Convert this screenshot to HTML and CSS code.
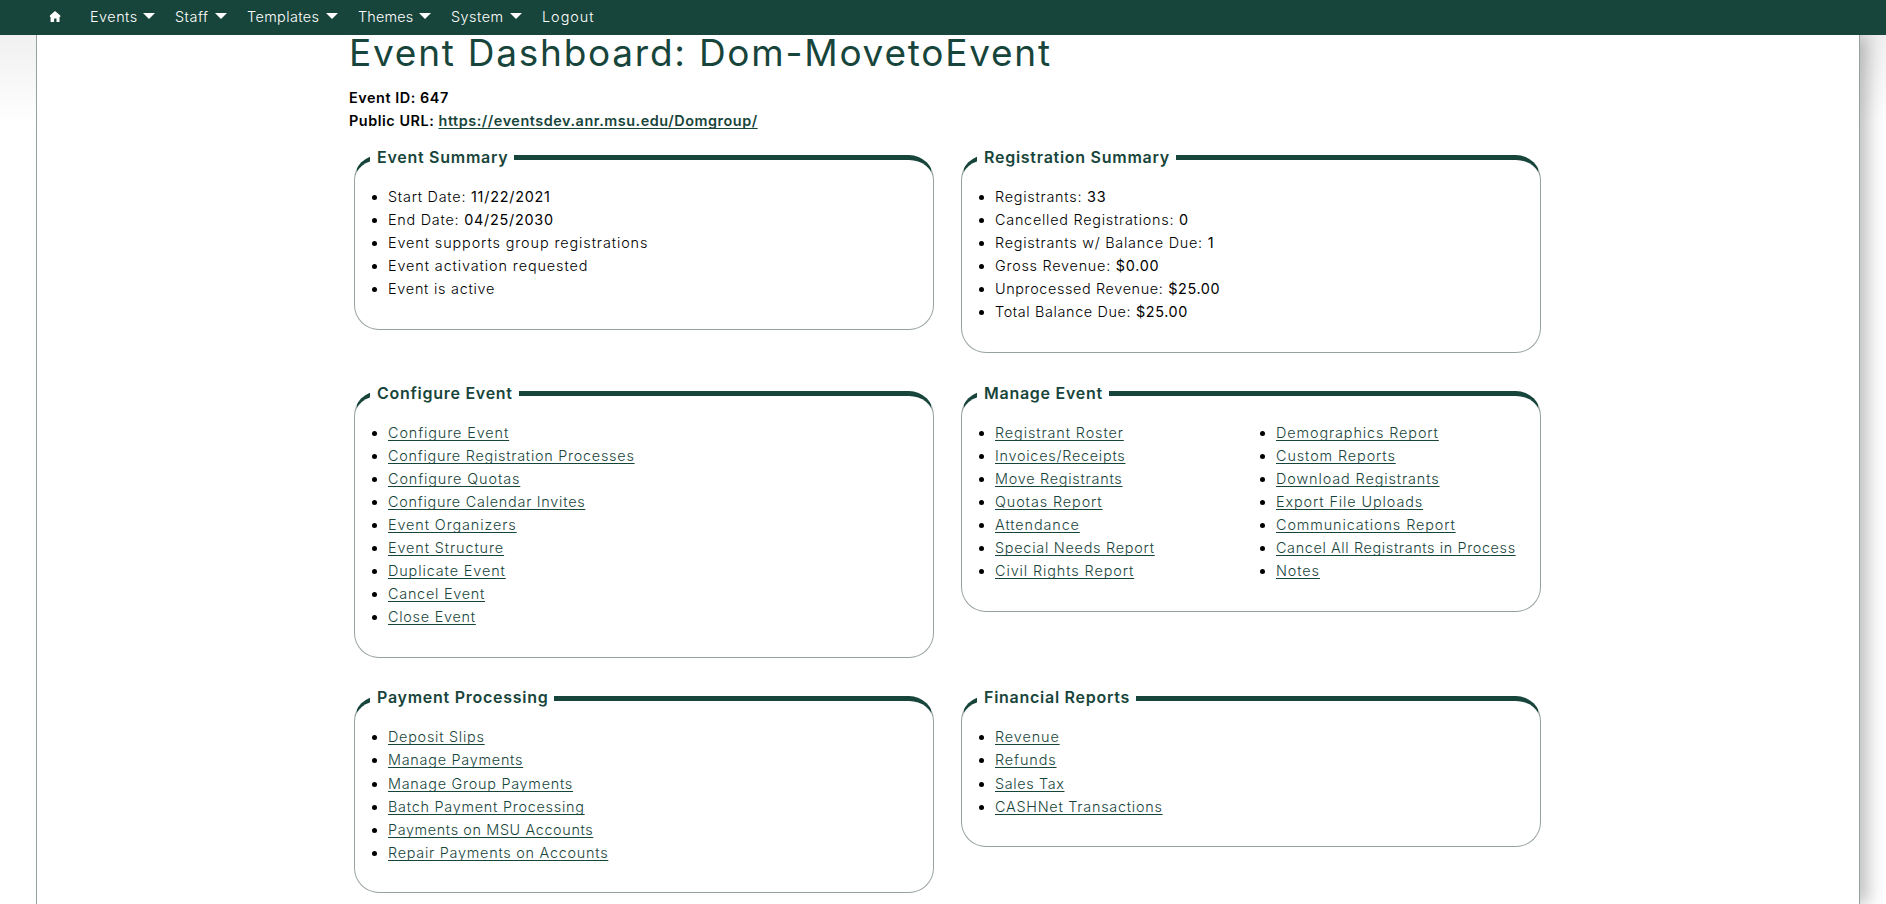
FILE: index.html
```html
<!DOCTYPE html>
<html lang="en">
<head>
<meta charset="utf-8">
<title>Event Dashboard</title>
<link rel="stylesheet" href="styles.css">
</head>
<body>
<nav class="nav">
  <a class="home" href="#" aria-label="Home"><svg width="12" height="11" viewBox="0 0 12 11"><path d="M6 0 11.3 4.6V6h-.8v5H7.5V7.4h-2.4V11H1.6V6H.9V4.6z" fill="#fff"/></svg></a>
  <a class="item n1" href="#">Events<i class="caret"></i></a>
  <a class="item n2" href="#">Staff<i class="caret"></i></a>
  <a class="item n3" href="#">Templates<i class="caret"></i></a>
  <a class="item n4" href="#">Themes<i class="caret"></i></a>
  <a class="item n5" href="#">System<i class="caret"></i></a>
  <a class="item n6" href="#">Logout</a>
</nav>
<div class="page">
  <main class="content">
    <h1>Event Dashboard: Dom-MovetoEvent</h1>
    <p class="meta">Event ID: 647<br>Public URL: <a href="#">https://eventsdev.anr.msu.edu/Domgroup/</a></p>
    <div class="grid">
      <fieldset><legend>Event Summary</legend>
        <ul><li>Start Date: <b>11/22/2021</b></li><li>End Date: <b>04/25/2030</b></li><li class="wide">Event supports group registrations</li><li class="wide">Event activation requested</li><li>Event is active</li></ul>
      </fieldset>
      <fieldset><legend>Registration Summary</legend>
        <ul><li>Registrants: <b>33</b></li><li>Cancelled Registrations: <b>0</b></li><li>Registrants w/ Balance Due: <b>1</b></li><li>Gross Revenue: <b>$0.00</b></li><li class="tight">Unprocessed Revenue: <b>$25.00</b></li><li class="tight">Total Balance Due: <b>$25.00</b></li></ul>
      </fieldset>
      <fieldset><legend>Configure Event</legend>
        <ul><li class="wide"><a href="#">Configure Event</a></li><li><a href="#">Configure Registration Processes</a></li><li class="wide"><a href="#">Configure Quotas</a></li><li><a href="#">Configure Calendar Invites</a></li><li class="wide"><a href="#">Event Organizers</a></li><li class="wide"><a href="#">Event Structure</a></li><li class="wide"><a href="#">Duplicate Event</a></li><li><a href="#">Cancel Event</a></li><li><a href="#">Close Event</a></li></ul>
      </fieldset>
      <fieldset><legend>Manage Event</legend>
        <div class="two">
        <ul><li class="wide"><a href="#">Registrant Roster</a></li><li><a href="#">Invoices/Receipts</a></li><li><a href="#">Move Registrants</a></li><li class="wide"><a href="#">Quotas Report</a></li><li class="wide"><a href="#">Attendance</a></li><li><a href="#">Special Needs Report</a></li><li class="wide"><a href="#">Civil Rights Report</a></li></ul>
        <ul><li class="wide"><a href="#">Demographics Report</a></li><li class="wide"><a href="#">Custom Reports</a></li><li class="wide"><a href="#">Download Registrants</a></li><li class="wide"><a href="#">Export File Uploads</a></li><li class="wide"><a href="#">Communications Report</a></li><li class="tight"><a href="#">Cancel All Registrants in Process</a></li><li class="wide"><a href="#">Notes</a></li></ul>
        </div>
      </fieldset>
      <fieldset><legend>Payment Processing</legend>
        <ul><li><a href="#">Deposit Slips</a></li><li><a href="#">Manage Payments</a></li><li><a href="#">Manage Group Payments</a></li><li><a href="#">Batch Payment Processing</a></li><li class="tight"><a href="#">Payments on MSU Accounts</a></li><li><a href="#">Repair Payments on Accounts</a></li></ul>
      </fieldset>
      <fieldset><legend>Financial Reports</legend>
        <ul><li class="wide"><a href="#">Revenue</a></li><li class="wide"><a href="#">Refunds</a></li><li class="tight"><a href="#">Sales Tax</a></li><li><a href="#">CASHNet Transactions</a></li></ul>
      </fieldset>
    </div>
  </main>
</div>
</body>
</html>
```
FILE: styles.css
```css
* { box-sizing: border-box; }
html, body { height: 100%; }
body {
  margin: 0;
  display: flex;
  flex-direction: column;
  overflow: hidden;
  background: linear-gradient(#eff0ef 35px, #fff 125px);
  color: #000;
  font: 300 14.4px/23.04px Inter, "Open Sans", sans-serif;
  letter-spacing: 0.5px;
}
a { color: #18453b; text-underline-offset: 2px; text-decoration-thickness: 1px; text-decoration-skip-ink: none; }
.nav {
  flex: none;
  height: 35px;
  padding: 0 0 2px 49px;
  display: flex;
  align-items: center;
  background: #18453b;
}
.nav a { color: #fff; text-decoration: none; display: flex; align-items: center; }
.home { width: 41px; }
.item { justify-content: space-between; margin-right: 20px; white-space: nowrap; }
.n1 { width: 65px; }
.n2 { width: 52px; }
.n3 { width: 91px; letter-spacing: 0.4px; }
.n4 { width: 73px; letter-spacing: 0.2px; }
.n5 { width: 71px; }
.n6 { letter-spacing: 1px; }
.caret { border: 6px solid transparent; border-top-color: #fff; border-bottom: 0; }
.page {
  flex: 1;
  min-height: 0;
  margin: 0 26px 0 36px;
  border: solid #97a29f;
  border-width: 0 1px;
  background: #fff;
  box-shadow: 8px 0 16px 0 rgba(0, 0, 0, 0.25);
  clip-path: inset(0 -40px 0 0);
}
.content { width: 1191px; margin: 0 0 0 312px; }
h1 {
  margin: 0;
  font-size: 37px;
  font-weight: 400;
  line-height: 36px;
  letter-spacing: 1.75px;
  color: #18453b;
  white-space: nowrap;
}
.meta { margin: 15px 0 0; font-weight: 600; letter-spacing: 0.55px; }
.grid {
  display: grid;
  grid-template-columns: 580px 580px;
  gap: 27.5px 27px;
  align-items: start;
  margin: 13.1px 0 0 5px;
}
fieldset {
  min-width: 0;
  margin: 0;
  padding: 0 15px 14.4px;
  border: 1px solid #97a29f;
  border-top: 5px solid #18453b;
  border-radius: 25px;
}
legend {
  padding: 0 6px 0 7px;
  color: #18453b;
  font-size: 16px;
  font-weight: 600;
  line-height: 25.6px;
  letter-spacing: 0.73px;
}
ul { margin: 14.4px 0; padding-left: 18px; letter-spacing: 0.75px; }
.wide { letter-spacing: 0.9px; }
.tight { letter-spacing: 0.63px; }
b { font-weight: 400; }
li::marker { font-size: 14px; }
.two { display: grid; grid-template-columns: 281px 1fr; white-space: nowrap; }
```
